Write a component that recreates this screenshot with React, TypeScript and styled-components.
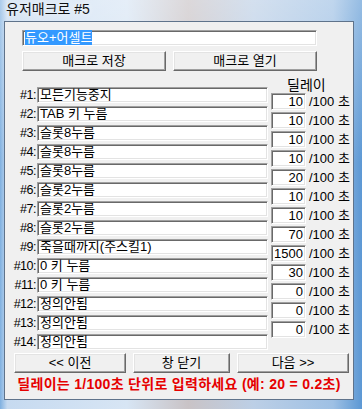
import styled, { createGlobalStyle } from "styled-components";

const GlobalStyle = createGlobalStyle`
  * { box-sizing: border-box; }
  html, body {
    margin: 0;
    padding: 0;
    width: 362px;
    height: 409px;
    overflow: hidden;
    font-family: "Liberation Sans", "Noto Sans CJK KR", sans-serif;
  }
`;

const steps = [
  "모든기능중지",
  "TAB 키 누름",
  "슬롯8누름",
  "슬롯8누름",
  "슬롯8누름",
  "슬롯2누름",
  "슬롯2누름",
  "슬롯2누름",
  "죽을때까지(주스킬1)",
  "0 키 누름",
  "0 키 누름",
  "정의안됨",
  "정의안됨",
  "정의안됨",
];

const delays = [10, 10, 10, 10, 20, 10, 10, 70, 1500, 30, 0, 0, 0];

export default function App() {
  return (
    <>
      <GlobalStyle />
      <Window>
        <TitleBar>유저매크로 #5</TitleBar>
        <Client>
          <NameField>
            <Selected>듀오+어셀트</Selected>
          </NameField>
          <ButtonRow>
            <Button $w={144}>매크로 저장</Button>
            <Button $w={144}>매크로 열기</Button>
          </ButtonRow>
          <Main>
            <StepList>
              {steps.map((s, i) => (
                <StepRow key={i}>
                  <StepLabel>#{i + 1}:</StepLabel>
                  <Edit $w={231}>{s}</Edit>
                </StepRow>
              ))}
            </StepList>
            <DelayColumn>
              <DelayHeader>딜레이</DelayHeader>
              {delays.map((d, i) => (
                <DelayRow key={i}>
                  <DelayBox>{d}</DelayBox>
                  <DelayUnit>/100 초</DelayUnit>
                </DelayRow>
              ))}
            </DelayColumn>
          </Main>
          <Footer>
            <Button $w={112}>&lt;&lt; 이전</Button>
            <Button $w={97}>창 닫기</Button>
            <Button $w={112}>다음 &gt;&gt;</Button>
          </Footer>
          <Hint>딜레이는 1/100초 단위로 입력하세요 (예: 20 = 0.2초)</Hint>
        </Client>
      </Window>
    </>
  );
}

const Window = styled.div`
  width: 362px;
  height: 409px;
  display: flex;
  flex-direction: column;
  padding: 0 8px 9px 4px;
  background:
    linear-gradient(180deg, rgba(255, 255, 255, 0.35), rgba(255, 255, 255, 0) 40%),
    linear-gradient(
      90deg,
      #7fb0e0 0%,
      #c6daf0 2%,
      #d7e5f4 35%,
      #c9c3c6 52%,
      #bccfe6 70%,
      #9ec0e4 92%,
      #5c98d4 100%
    );
`;

const TitleBar = styled.div`
  height: 21px;
  line-height: 19px;
  padding-left: 2px;
  font-size: 14px;
  color: #111;
  text-shadow: 0 0 6px rgba(255, 255, 255, 0.9);
`;

const Client = styled.div`
  flex: 1;
  display: flex;
  flex-direction: column;
  background: #f0f0f0;
  border: 1px solid #5f738b;
  font-size: 13px;
  line-height: 15px;
  color: #000;
`;

const editBorder = `
  border: 1px solid;
  border-color: #a0a0a0 #ffffff #ffffff #a0a0a0;
  box-shadow: inset 1px 1px #696969, inset -1px -1px #e3e3e3;
  background: #fff;
`;

const NameField = styled.div`
  ${editBorder}
  margin: 8px 0 0 17px;
  width: 295px;
  height: 16px;
  padding: 0 2px;
  line-height: 14px;
  font-size: 13px;
`;

const Selected = styled.span`
  background: #3399ff;
  color: #fff;
`;

const ButtonRow = styled.div`
  display: flex;
  gap: 7px;
  margin: 5px 0 0 17px;
`;

const Button = styled.div<{ $w: number }>`
  width: ${(p) => p.$w}px;
  height: 20px;
  display: flex;
  align-items: center;
  justify-content: center;
  background: #f0f0f0;
  border: 1px solid;
  border-color: #ffffff #696969 #696969 #ffffff;
  box-shadow: inset -1px -1px #a0a0a0, inset 1px 1px #e3e3e3;
  font-size: 13px;
  line-height: 16px;
`;

const Main = styled.div`
  display: flex;
  align-items: flex-start;
  height: 273px;
  margin-top: 6px;
`;

const StepList = styled.div`
  display: flex;
  flex-direction: column;
  gap: 3px;
  padding-top: 10px;
`;

const StepRow = styled.div`
  display: flex;
  align-items: center;
  height: 16px;
`;

const StepLabel = styled.div`
  width: 32px;
  padding-right: 1px;
  text-align: right;
  font-size: 12.5px;
  letter-spacing: -0.5px;
`;

const Edit = styled.div<{ $w: number }>`
  ${editBorder}
  width: ${(p) => p.$w}px;
  height: 16px;
  padding: 0 2px;
  line-height: 14px;
  white-space: nowrap;
  overflow: hidden;
`;

const DelayColumn = styled.div`
  display: flex;
  flex-direction: column;
  gap: 2px;
  margin-left: 3px;
`;

const DelayHeader = styled.div`
  height: 14px;
  line-height: 17px;
  padding-left: 16px;
  font-size: 14px;
`;

const DelayRow = styled.div`
  display: flex;
  align-items: center;
  height: 17px;
`;

const DelayBox = styled.div`
  ${editBorder}
  width: 35px;
  height: 17px;
  padding: 0 2px;
  line-height: 15px;
  text-align: right;
`;

const DelayUnit = styled.div`
  margin-left: 3px;
  white-space: nowrap;
`;

const Footer = styled.div`
  display: flex;
  gap: 7px;
  margin: 3px 0 0 9px;
`;

const Hint = styled.div`
  margin-top: 3px;
  height: 16px;
  line-height: 16px;
  text-align: center;
  color: #e60000;
  font-weight: bold;
  font-size: 14px;
  letter-spacing: 0.3px;
  white-space: nowrap;
`;
